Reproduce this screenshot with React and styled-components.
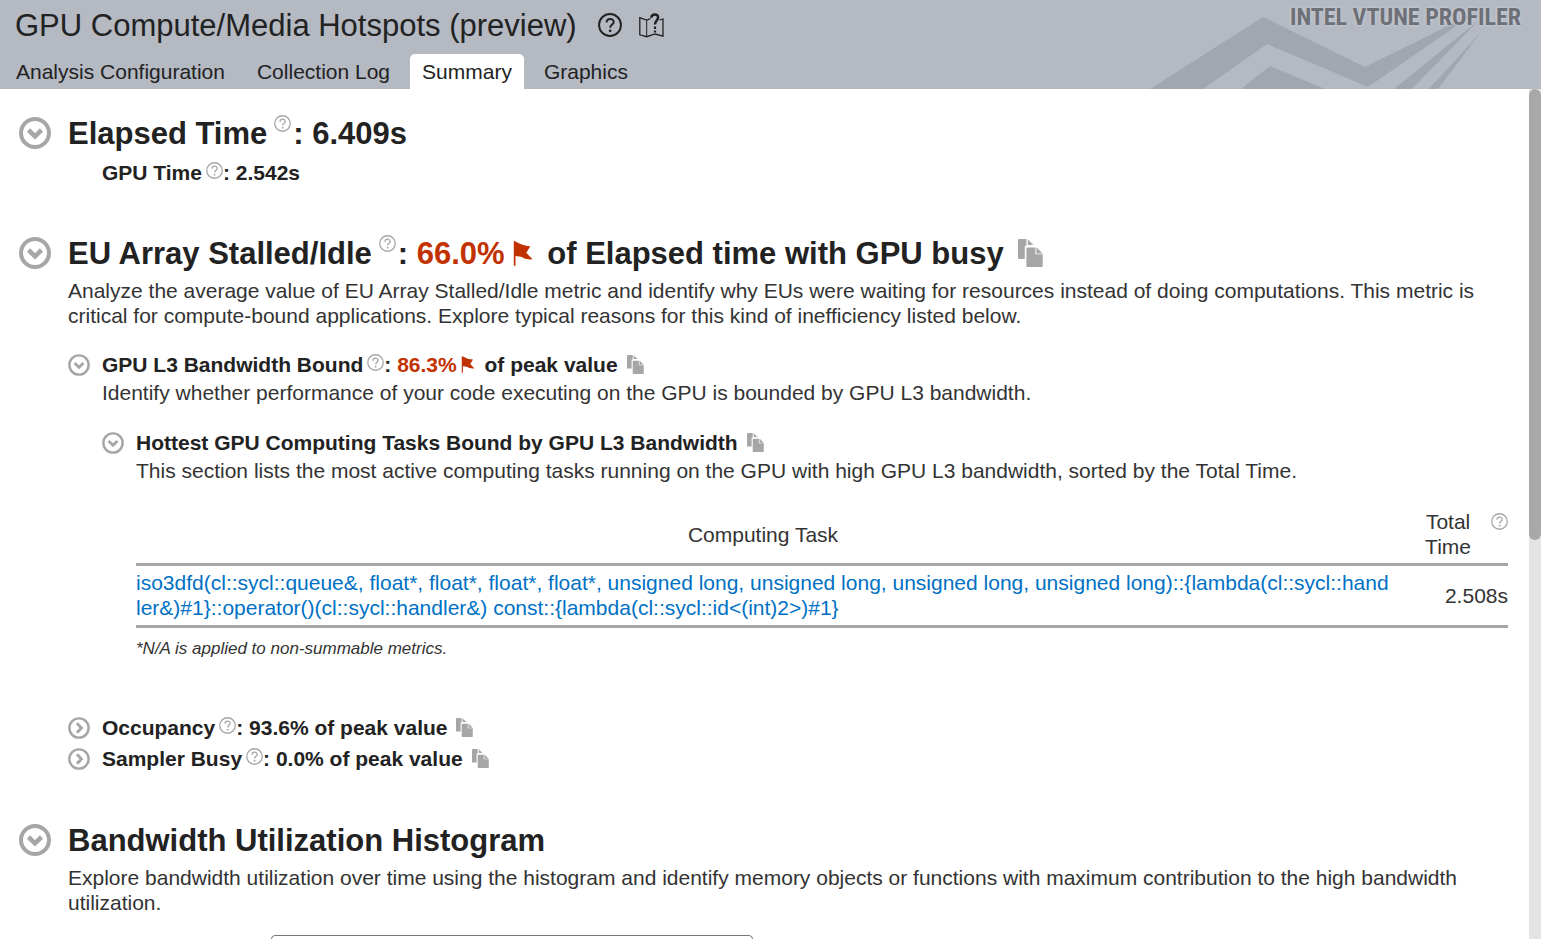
import React from "react";
import styled, { createGlobalStyle } from "styled-components";

const Global = createGlobalStyle`
  *, *::before, *::after { box-sizing: border-box; }
  body {
    margin: 0;
    background: #fff;
    color: #222;
    font-family: "Liberation Sans", Arial, sans-serif;
    font-size: 21px;
    line-height: 25px;
  }
  h1, h2, h3, h4, p { margin: 0; }
  button { font: inherit; color: inherit; border: 0; background: none; padding: 0; }
  svg { display: block; }
`;

const Page = styled.div`
  display: flex;
  flex-direction: column;
  height: 100vh;
  overflow: hidden;
`;

const Header = styled.header`
  position: relative;
  flex: none;
  background: #b4b9c2;
`;

const TitleBar = styled.div`
  display: flex;
  align-items: center;
  gap: 17px;
  height: 50px;
  padding-left: 15px;
`;

const Title = styled.h1`
  margin-right: 4px;
  font-size: 31px;
  font-weight: 400;
`;

const TitleButton = styled.button`
  color: #222;
  width: 24px;
`;

const Tabs = styled.nav`
  display: flex;
  gap: 8px;
  padding: 4px 4px 0;
`;

const Tab = styled.button`
  height: 35px;
  padding: 0 12px;
  border-radius: 5px 5px 0 0;
  background: ${(p) => (p.$active ? "#fff" : "transparent")};
`;

const Brand = styled.div`
  position: absolute;
  top: 0;
  right: 0;
  height: 100%;
  width: 391px;
`;

const BrandName = styled.div`
  position: absolute;
  top: 0;
  right: 20px;
  font-family: "Roboto Condensed", "Open Sans Condensed", "Liberation Sans Narrow", "Liberation Sans", sans-serif;
  font-size: 24px;
  font-weight: 700;
  line-height: 34px;
  color: #6d7077;
  white-space: nowrap;
  text-shadow: 0 0 3px #d5d8dd;
`;

const Body = styled.div`
  display: flex;
  flex: 1;
  min-height: 0;
`;

const Content = styled.main`
  flex: 1;
  min-width: 0;
  overflow: hidden;
  padding: 24px 21px 0 19px;
`;

const ScrollTrack = styled.div`
  flex: none;
  width: 12px;
  background: #e4e4e4;
`;

const ScrollThumb = styled.div`
  height: 53%;
  border-radius: 6px;
  background: #a8a8a8;
`;

const Section = styled.section`
  display: grid;
  grid-template-columns: 32px minmax(0, 1fr);
  column-gap: 17px;
  margin-bottom: ${(p) => p.$after || 0}px;
`;

const SubSection = styled(Section)`
  grid-template-columns: 22px minmax(0, 1fr);
  column-gap: 12px;
`;

const Toggle = styled.button`
  align-self: start;
  display: flex;
  align-items: center;
  height: ${(p) => (p.$large ? 40 : 31)}px;
`;

const Heading = styled.h2`
  display: flex;
  align-items: center;
  height: 40px;
  font-size: 31px;
  font-weight: 700;
  white-space: pre;
`;

const SubHeading = styled.h3`
  display: flex;
  align-items: center;
  height: 31px;
  font-size: 21px;
  font-weight: 700;
  white-space: pre;
`;

const HelpButton = styled.button`
  align-self: flex-start;
  margin: ${(p) => (p.$large ? "2px 2px 0 7px" : "5px 0 0 4px")};
  color: #a6a6a6;
`;

const CopyButton = styled.button`
  margin-left: ${(p) => (p.$large ? 14 : 9)}px;
`;

const Alert = styled.span`
  display: flex;
  align-items: center;
  gap: ${(p) => (p.$large ? 8 : 4)}px;
  margin-right: ${(p) => (p.$large ? 6 : 4)}px;
  color: #c23200;
`;

const Text = styled.p`
  margin-top: ${(p) => p.$before || 0}px;
  margin-bottom: ${(p) => p.$after || 0}px;
  color: #333;
`;

const Metric = styled.div`
  padding: 4px 0 0 34px;
`;

const Table = styled.table`
  width: 100%;
  border-collapse: collapse;
  color: #333;
`;

const Th = styled.th`
  font-weight: 400;
  padding: 0 0 4px;
  border-bottom: 3px solid #a6a6a6;
`;

const TotalHead = styled.div`
  display: flex;
  justify-content: flex-end;
  gap: 20px;
`;

const TableHelp = styled.button`
  align-self: flex-start;
  margin-top: 4px;
  color: #a6a6a6;
`;

const Td = styled.td`
  padding: 4px 0 5px;
  border-bottom: 3px solid #a6a6a6;
  text-align: ${(p) => (p.$number ? "right" : "left")};
  width: ${(p) => (p.$number ? "118px" : "auto")};
`;

const TaskLink = styled.a`
  color: #0071c5;
  text-decoration: none;
  word-break: break-all;
`;

const Note = styled.p`
  font-size: 17px;
  font-style: italic;
  line-height: 20px;
  margin: 11px 0 53px;
  color: #333;
`;

const DomainSelect = styled.select`
  display: block;
  width: 482px;
  height: 32px;
  margin: 20px 0 0 203px;
  border: 1px solid #767676;
  border-radius: 4px;
  background: #fff;
  font: inherit;
`;

function QuestionIcon({ size = 16, width = 1.2 }) {
  return (
    <svg width={size} height={size} viewBox="0 0 16 16" fill="none" stroke="currentColor" strokeWidth={width}>
      <circle cx="8" cy="8" r="7.3" />
      <path d="M5.7 6.4C5.7 3.2 10.5 3.3 10.5 6C10.5 7.7 8.1 7.7 8.1 9.8" />
      <circle cx="8.1" cy="11.9" r=".9" fill="currentColor" stroke="none" />
    </svg>
  );
}

function TourIcon() {
  return (
    <svg width="26" height="26" viewBox="0 0 26 26" fill="none" stroke="currentColor" strokeWidth="1.3">
      <path d="M11.5 6.7L7.7 8L.8 5.7V22.8L7.7 24.7L16 22L24 24.2V7L20.5 8" />
      <path d="M7.7 8V24.7" strokeWidth="1" />
      <path d="M12.4 5.8C12.4 1.2 19.6 1.4 19.1 5.6C18.8 8.5 16 8.8 16 12.6" strokeWidth="2.5" />
      <path d="M16 14.4V16.9M16 18.6V20.6" strokeWidth="2.2" />
    </svg>
  );
}

function ChevronIcon({ size, closed }) {
  const large = size > 30;
  return (
    <svg width={size} height={size} viewBox="0 0 32 32" fill="none" stroke="#a6a6a6" strokeWidth={large ? 4 : 3.6}>
      <circle cx="16" cy="16" r="14" />
      <path d={closed ? "M13 9L19.5 16L13 23" : "M9.5 13L16 19.3L22.5 13"} strokeWidth={large ? 4.6 : 4.2} />
    </svg>
  );
}

function FlagIcon({ large }) {
  return (
    <svg width={large ? 20 : 14} height={large ? 25 : 17} viewBox="0 0 20 25" fill="currentColor">
      <path d="M.8 0L2.5 .6Q9 4.8 17.3 5.2L13.3 11.8L19.5 18.3Q12.5 19 8 15.8L2.5 15V24.8H.8Z" />
    </svg>
  );
}

function CopyIcon({ large }) {
  return (
    <svg width={large ? 25 : 17} height={large ? 28 : 19} viewBox="0 0 25 28" fill="#a6a6a6">
      <path d="M1 0H8.4V6.8H7Q6.8 7 6.8 8.5V20H1Q0 20 0 19V1Q0 0 1 0Z" />
      <path d="M9.8 .3L15.4 6H9.8Z" />
      <path d="M9.4 8.4H17.4V15.2H24.7V27Q24.7 28 23.7 28H9.4Q8.4 28 8.4 27V9.4Q8.4 8.4 9.4 8.4Z" />
      <path d="M18.4 8.2L24.6 14.4H18.4Z" />
    </svg>
  );
}

const Help = ({ large }) => (
  <HelpButton $large={large} aria-label="Help">
    <QuestionIcon size={17} />
  </HelpButton>
);

const Copy = ({ large }) => (
  <CopyButton $large={large} aria-label="Copy">
    <CopyIcon large={large} />
  </CopyButton>
);

const Expander = ({ large, closed }) => (
  <Toggle $large={large} aria-label={closed ? "Expand" : "Collapse"}>
    <ChevronIcon size={large ? 32 : 22} closed={closed} />
  </Toggle>
);

export default function App() {
  return (
    <Page>
      <Global />
      <Header>
        <Brand>
          <svg width="391" height="89" viewBox="0 0 391 89" fill="#a2a6af" aria-hidden="true">
            <path d="M0 89L113 17L215 67L328 11L218 87L117 44L53 89Z" />
            <path d="M91 89L120 66L175 89Z" />
            <path d="M244 89L329 20L262 89Z" />
            <path d="M279 89L331 32L288 89Z" />
          </svg>
          <BrandName>INTEL VTUNE PROFILER</BrandName>
        </Brand>
        <TitleBar>
          <Title>GPU Compute/Media Hotspots (preview)</Title>
          <TitleButton aria-label="Help">
            <QuestionIcon size={24} width={1.3} />
          </TitleButton>
          <TitleButton aria-label="Guided tour">
            <TourIcon />
          </TitleButton>
        </TitleBar>
        <Tabs>
          <Tab>Analysis Configuration</Tab>
          <Tab>Collection Log</Tab>
          <Tab $active>Summary</Tab>
          <Tab>Graphics</Tab>
        </Tabs>
      </Header>
      <Body>
        <Content>
          <Section $after={45}>
            <Expander large />
            <div>
              <Heading>Elapsed Time<Help large />: 6.409s</Heading>
              <Metric>
                <SubHeading>GPU Time<Help />: 2.542s</SubHeading>
              </Metric>
            </div>
          </Section>

          <Section $after={46}>
            <Expander large />
            <div>
              <Heading>
                EU Array Stalled/Idle<Help large />{": "}
                <Alert $large>66.0%<FlagIcon large /></Alert>{" of Elapsed time with GPU busy"}
                <Copy large />
              </Heading>
              <Text $before={5} $after={21}>
                Analyze the average value of EU Array Stalled/Idle metric and identify why EUs were waiting for
                resources instead of doing computations. This metric is critical for compute-bound applications.
                Explore typical reasons for this kind of inefficiency listed below.
              </Text>
              <SubSection>
                <Expander />
                <div>
                  <SubHeading>
                    GPU L3 Bandwidth Bound<Help />{": "}
                    <Alert>86.3%<FlagIcon /></Alert>{" of peak value"}
                    <Copy />
                  </SubHeading>
                  <Text $after={22}>
                    Identify whether performance of your code executing on the GPU is bounded by GPU L3 bandwidth.
                  </Text>
                  <SubSection>
                    <Expander />
                    <div>
                      <SubHeading as="h4">
                        Hottest GPU Computing Tasks Bound by GPU L3 Bandwidth
                        <Copy />
                      </SubHeading>
                      <Text $after={26}>
                        This section lists the most active computing tasks running on the GPU with high GPU L3
                        bandwidth, sorted by the Total Time.
                      </Text>
                      <Table>
                        <thead>
                          <tr>
                            <Th scope="col">Computing Task</Th>
                            <Th scope="col">
                              <TotalHead>
                                <span>Total<br />Time</span>
                                <TableHelp aria-label="Help"><QuestionIcon size={17} /></TableHelp>
                              </TotalHead>
                            </Th>
                          </tr>
                        </thead>
                        <tbody>
                          <tr>
                            <Td>
                              <TaskLink href="#task">
                                {"iso3dfd(cl::sycl::queue&, float*, float*, float*, float*, unsigned long, unsigned long, unsigned long, unsigned long)::{lambda(cl::sycl::handler&)#1}::operator()(cl::sycl::handler&) const::{lambda(cl::sycl::id<(int)2>)#1}"}
                              </TaskLink>
                            </Td>
                            <Td $number>2.508s</Td>
                          </tr>
                        </tbody>
                      </Table>
                      <Note>*N/A is applied to non-summable metrics.</Note>
                    </div>
                  </SubSection>
                </div>
              </SubSection>
              <SubSection>
                <Expander closed />
                <SubHeading>Occupancy<Help />: 93.6% of peak value<Copy /></SubHeading>
              </SubSection>
              <SubSection>
                <Expander closed />
                <SubHeading>Sampler Busy<Help />: 0.0% of peak value<Copy /></SubHeading>
              </SubSection>
            </div>
          </Section>

          <Section>
            <Expander large />
            <div>
              <Heading>Bandwidth Utilization Histogram</Heading>
              <Text $before={5}>
                Explore bandwidth utilization over time using the histogram and identify memory objects or functions
                with maximum contribution to the high bandwidth utilization.
              </Text>
              <DomainSelect aria-label="Bandwidth domain" />
            </div>
          </Section>
        </Content>
        <ScrollTrack>
          <ScrollThumb />
        </ScrollTrack>
      </Body>
    </Page>
  );
}
